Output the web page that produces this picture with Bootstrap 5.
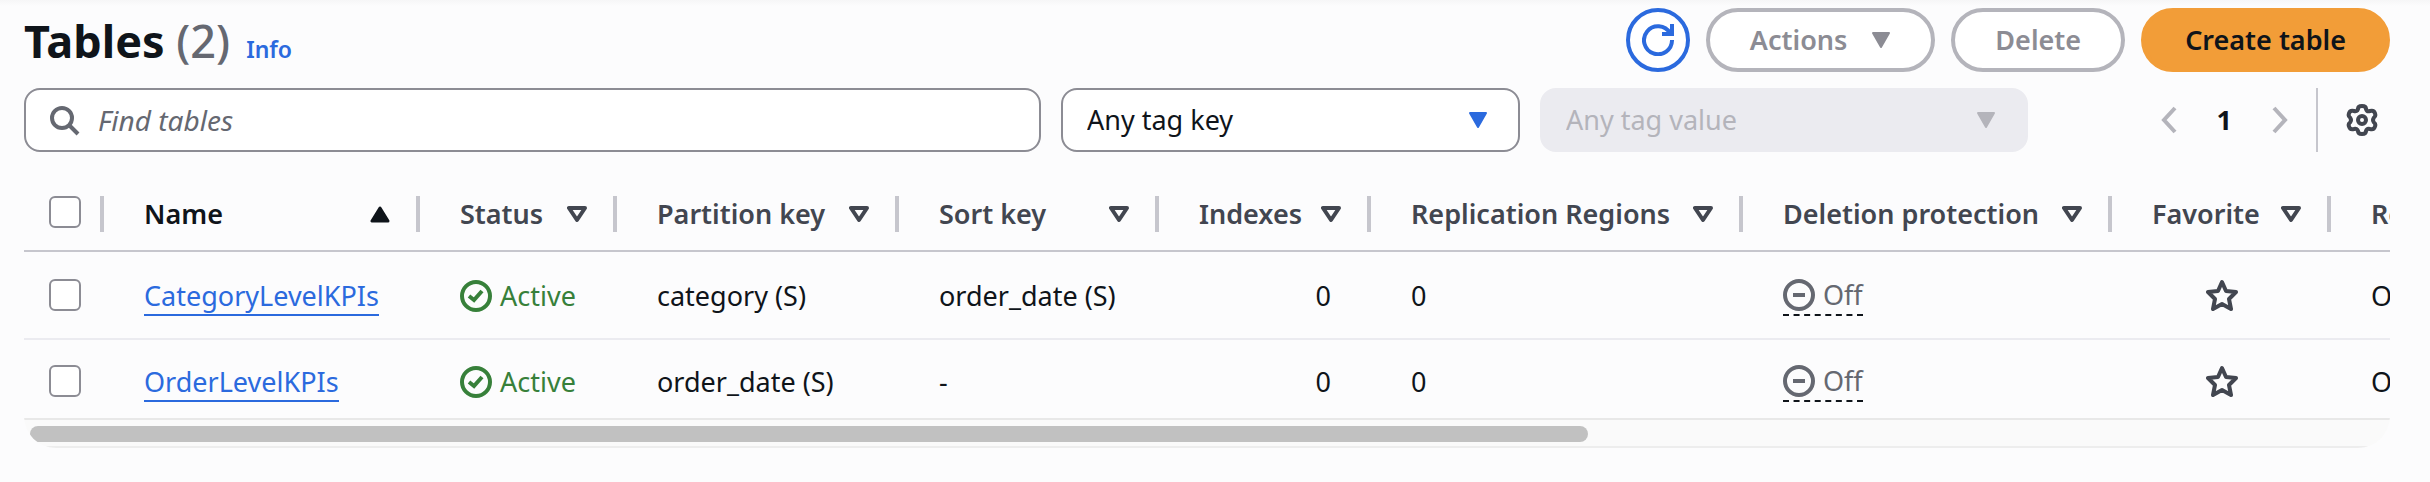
<!DOCTYPE html>
<html lang="en">
<head>
<meta charset="utf-8">
<meta name="viewport" content="width=device-width, initial-scale=1">
<title>Tables</title>
<link href="https://cdn.jsdelivr.net/npm/bootstrap@5.3.0/dist/css/bootstrap.min.css" rel="stylesheet">
<style>
  body { font-family: "Noto Sans", "Open Sans", sans-serif; font-size: 27px; line-height: 40px; color: #0f141a; background: #fcfcfd; }
  .page-shell { padding: 8px 40px 34px 24px; background: linear-gradient(#f6f6f7, #fcfcfd 6px) no-repeat; }
  .page-title { font-size: 45px; line-height: 66px; margin: 0 0 -2px; }
  .page-title .count { color: #656871; font-weight: 500; }
  .info-link { font-size: 23px; font-weight: 600; color: #2b6ade; text-decoration: none; }
  .btn-pill { height: 64px; border-radius: 32px; border: 4px solid #b4b4bb; background: #fff; color: #8c8c94; font-size: 27px; line-height: 40px; font-weight: 600; padding: 0 40px; }
  .btn-pill:disabled { opacity: 1; background: #fff; color: #8c8c94; border-color: #b4b4bb; }
  .btn-round { width: 64px; padding: 0; border-color: #2b6ade; color: #2b6ade; }
  .btn-main { border-color: #f29d38; background: #f29d38; color: #0f141a; }
  .filters { gap: 20px; margin-top: 16px; }
  .field-box { height: 64px; border: 2px solid #8c8c94; border-radius: 16px; background: #fff; font-size: 27px; line-height: 40px; color: #0f141a; }
  .search-box { flex: 1017 1 0; }
  .search-box svg { position: absolute; left: 26px; top: 18px; }
  .search-box input { padding: 0 24px 0 72px; font-size: 28px; }
  .search-box input::placeholder { color: #656871; font-style: italic; opacity: 1; }
  .pick { position: relative; }
  .pick select { appearance: none; background-image: none; padding: 0 64px 0 24px; }
  .pick select:disabled { background: #ebebf0; border-color: #ebebf0; color: #b4b4bb; opacity: 1; }
  .pick svg { position: absolute; right: 32px; top: 24px; pointer-events: none; }
  .pick-key { flex: 459 1 0; }
  .pick-value { flex: 488 1 0; }
  .pager { flex: 330 1 0; padding-right: 12px; }
  .pager .current { margin: 0 40px; }
  .icon-btn { border: 0; padding: 0; background: none; display: flex; color: #424650; }
  .icon-btn:disabled { color: #b4b4bb; }
  .rule { width: 2px; height: 64px; margin: 0 28px; background: #c6c6cd; }
  .scroller { margin-top: 26px; overflow: hidden; border-radius: 0 0 32px 32px; }
  .grid { table-layout: fixed; width: 2700px; margin: 0; border-collapse: separate; border-spacing: 0; }
  .grid th { height: 74px; padding: 0 30px 0 40px; border-bottom: 2px solid #c6c6cd; color: #424650; position: relative; white-space: nowrap; font-weight: 600; }
  .grid th:not(:last-child)::after { content: ""; position: absolute; right: 0; top: 18px; width: 4px; height: 36px; background: #c6c6cd; }
  .grid th.sorted { color: #0f141a; }
  .grid td { height: 88px; padding: 24px 40px 0; border-bottom: 2px solid #ebebf0; white-space: nowrap; vertical-align: top; }
  .grid tbody tr:last-child td { height: 78px; padding-top: 22px; border-bottom: 0; }
  .grid .tick-cell { padding-left: 25px; padding-right: 0; }
  .tick { appearance: none; display: block; width: 32px; height: 32px; border: 2px solid #8c8c94; border-radius: 6px; background: #fff; margin: 0 0 4px; }
  td .tick, .star-btn { margin-top: 3px; }
  .table-link { color: #2b6ade; text-decoration: none; border-bottom: 2px solid #2b6ade; }
  .state-on { color: #37803a; }
  .state-off { color: #656871; border-bottom: 2px dashed #0f141a; line-height: 38px; vertical-align: top; }
  .track { height: 30px; padding: 6px; border-top: 2px solid #e8e8e8; border-bottom: 2px solid #ededed; background: #fafafa; }
  .thumb { height: 16px; border-radius: 8px; background: #c1c1c1; }
</style>
</head>
<body>
<svg class="d-none" xmlns="http://www.w3.org/2000/svg">
  <symbol id="i-down" viewBox="0 0 20 17"><path d="M2 1h16L10 15z" fill="currentColor" stroke="currentColor" stroke-width="2" stroke-linejoin="round"/></symbol>
  <symbol id="i-up" viewBox="0 0 20 17"><path d="M2 15h16L10 2z" fill="currentColor" stroke="currentColor" stroke-width="3" stroke-linejoin="round"/></symbol>
  <symbol id="i-sort" viewBox="0 0 20 17"><path d="M2 2h16L10 14z" fill="none" stroke="currentColor" stroke-width="4" stroke-linejoin="round"/></symbol>
  <symbol id="i-ok" viewBox="0 0 32 32"><circle cx="16" cy="16" r="14" fill="none" stroke="currentColor" stroke-width="4"/><path d="M9 16l5 4 8-9" fill="none" stroke="currentColor" stroke-width="4"/></symbol>
  <symbol id="i-off" viewBox="0 0 32 32"><circle cx="16" cy="16" r="14" fill="none" stroke="currentColor" stroke-width="4"/><path d="M10 16h12" stroke="currentColor" stroke-width="4"/></symbol>
  <symbol id="i-star" viewBox="0 0 32 32"><path d="M16 3l4 9 10 1-7 7 2 10-9-5-9 5 2-10-7-7 10-1z" fill="none" stroke="currentColor" stroke-width="4" stroke-linejoin="round"/></symbol>
</svg>
<main class="page-shell">
  <header class="d-flex align-items-center justify-content-between">
    <div class="d-flex align-items-baseline">
      <h1 class="page-title fw-bold">Tables <span class="count">(2)</span></h1>
      <a class="info-link ms-3" href="#">Info</a>
    </div>
    <div class="d-flex gap-3">
      <button class="btn btn-pill btn-round d-flex align-items-center justify-content-center" type="button" aria-label="Refresh"><svg width="32" height="32" viewBox="0 0 32 32" fill="none" stroke="currentColor" stroke-width="4"><path d="M30 16A14 14 0 1 1 28 9M30 0v10H20"/></svg></button>
      <button class="btn btn-pill d-flex align-items-center" type="button" disabled>Actions<svg class="ms-4" width="20" height="17"><use href="#i-down"/></svg></button>
      <button class="btn btn-pill" type="button" disabled>Delete</button>
      <button class="btn btn-pill btn-main" type="button">Create table</button>
    </div>
  </header>
  <div class="filters d-flex">
    <div class="search-box position-relative">
      <svg width="30" height="30" viewBox="0 0 30 30" fill="none" stroke="#656871" stroke-width="4"><circle cx="12" cy="12" r="10"/><path d="M19 19l9 9"/></svg>
      <input class="field-box w-100" type="text" placeholder="Find tables" aria-label="Find tables">
    </div>
    <div class="pick pick-key">
      <select class="field-box w-100" aria-label="Tag key"><option>Any tag key</option></select>
      <svg width="20" height="17" color="#2b6ade"><use href="#i-down"/></svg>
    </div>
    <div class="pick pick-value">
      <select class="field-box w-100" aria-label="Tag value" disabled><option>Any tag value</option></select>
      <svg width="20" height="17" color="#b4b4bb"><use href="#i-down"/></svg>
    </div>
    <nav class="pager d-flex align-items-center justify-content-end" aria-label="Pages">
      <button class="icon-btn" type="button" disabled aria-label="Previous page"><svg width="16" height="28" viewBox="0 0 16 28" fill="none" stroke="currentColor" stroke-width="4"><path d="M14 2L3 14l11 12"/></svg></button>
      <span class="current fw-bold">1</span>
      <button class="icon-btn" type="button" disabled aria-label="Next page"><svg width="16" height="28" viewBox="0 0 16 28" fill="none" stroke="currentColor" stroke-width="4"><path d="M2 2l11 12L2 26"/></svg></button>
      <span class="rule"></span>
      <button class="icon-btn" type="button" aria-label="Preferences"><svg width="32" height="32" viewBox="0 0 32 32" fill="none" stroke="currentColor" stroke-width="4"><circle cx="16" cy="16" r="4"/><path d="M12 5Q12 2 16 2T20 5Q21 8 24 7Q28 6 29 9.500Q30 12 28 13.500Q26 16 28 18.500Q30 20 29 22.500Q28 26 24 25Q21 24 20 27Q20 30 16 30T12 27Q11 24 8 25Q4 26 3 22.500Q2 20 4 18.500Q6 16 4 13.500Q2 12 3 9.500Q4 6 8 7Q11 8 12 5z"/></svg></button>
    </nav>
  </div>
  <div class="scroller">
    <table class="grid">
      <colgroup><col style="width:80px"><col style="width:316px"><col style="width:197px"><col style="width:282px"><col style="width:260px"><col style="width:212px"><col style="width:372px"><col style="width:369px"><col style="width:219px"><col></colgroup>
      <thead>
        <tr>
          <th class="tick-cell"><input class="tick" type="checkbox" aria-label="Select all tables"></th>
          <th class="sorted"><div class="d-flex align-items-center justify-content-between">Name<svg width="20" height="17"><use href="#i-up"/></svg></div></th>
          <th><div class="d-flex align-items-center justify-content-between">Status<svg width="20" height="17"><use href="#i-sort"/></svg></div></th>
          <th><div class="d-flex align-items-center justify-content-between">Partition key<svg width="20" height="17"><use href="#i-sort"/></svg></div></th>
          <th><div class="d-flex align-items-center justify-content-between">Sort key<svg width="20" height="17"><use href="#i-sort"/></svg></div></th>
          <th><div class="d-flex align-items-center justify-content-between">Indexes<svg width="20" height="17"><use href="#i-sort"/></svg></div></th>
          <th><div class="d-flex align-items-center justify-content-between">Replication Regions<svg width="20" height="17"><use href="#i-sort"/></svg></div></th>
          <th><div class="d-flex align-items-center justify-content-between">Deletion protection<svg width="20" height="17"><use href="#i-sort"/></svg></div></th>
          <th><div class="d-flex align-items-center justify-content-between">Favorite<svg width="20" height="17"><use href="#i-sort"/></svg></div></th>
          <th>Read capacity mode</th>
        </tr>
      </thead>
      <tbody>
        <tr>
          <td class="tick-cell"><input class="tick" type="checkbox" aria-label="Select CategoryLevelKPIs"></td>
          <td><a class="table-link" href="#">CategoryLevelKPIs</a></td>
          <td><span class="state-on d-inline-flex align-items-center gap-2"><svg width="32" height="32"><use href="#i-ok"/></svg>Active</span></td>
          <td>category (S)</td><td>order_date (S)</td><td class="text-end">0</td><td>0</td>
          <td><span class="state-off d-inline-flex align-items-center gap-2"><svg width="32" height="32"><use href="#i-off"/></svg>Off</span></td>
          <td><button class="icon-btn star-btn mx-auto" type="button" aria-label="Add CategoryLevelKPIs to favorites"><svg width="32" height="32"><use href="#i-star"/></svg></button></td>
          <td>On-demand</td>
        </tr>
        <tr>
          <td class="tick-cell"><input class="tick" type="checkbox" aria-label="Select OrderLevelKPIs"></td>
          <td><a class="table-link" href="#">OrderLevelKPIs</a></td>
          <td><span class="state-on d-inline-flex align-items-center gap-2"><svg width="32" height="32"><use href="#i-ok"/></svg>Active</span></td>
          <td>order_date (S)</td><td>-</td><td class="text-end">0</td><td>0</td>
          <td><span class="state-off d-inline-flex align-items-center gap-2"><svg width="32" height="32"><use href="#i-off"/></svg>Off</span></td>
          <td><button class="icon-btn star-btn mx-auto" type="button" aria-label="Add OrderLevelKPIs to favorites"><svg width="32" height="32"><use href="#i-star"/></svg></button></td>
          <td>On-demand</td>
        </tr>
      </tbody>
    </table>
    <div class="track"><div class="thumb" style="width:66.2%"></div></div>
  </div>
</main>
<script src="https://cdn.jsdelivr.net/npm/bootstrap@5.3.0/dist/js/bootstrap.bundle.min.js"></script>
</body>
</html>
